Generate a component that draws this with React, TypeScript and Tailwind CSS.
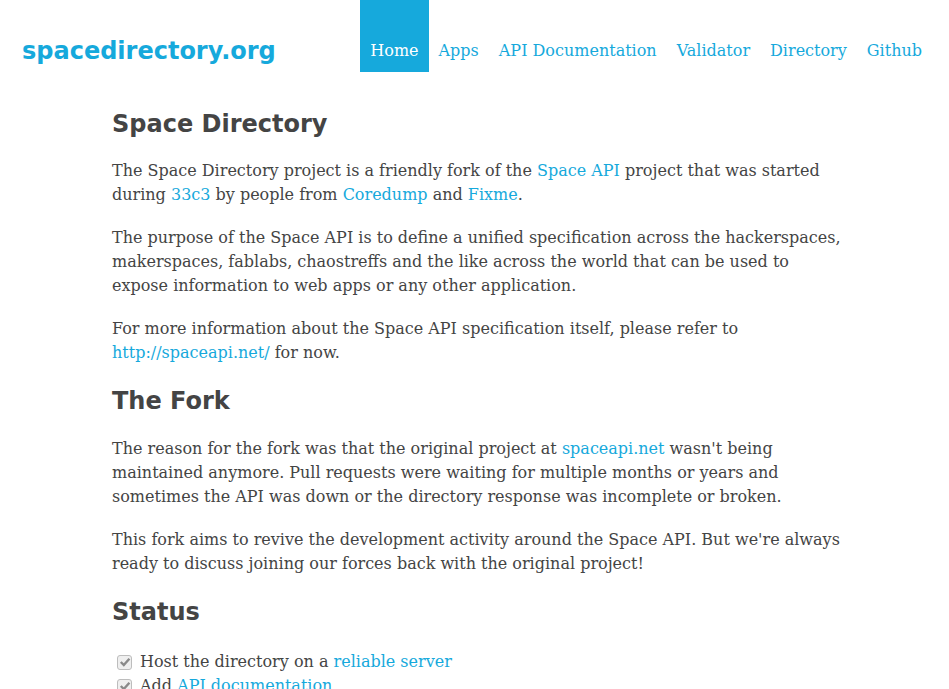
const LINK = "text-[#16a9dc]";
const SANS = "font-[family-name:DejaVu_Sans,sans-serif]";

function A({ children }: { children: React.ReactNode }) {
  return (
    <a href="#" className={`${LINK} no-underline`}>
      {children}
    </a>
  );
}

function Check() {
  return (
    <span className="mr-[8px] ml-[5px] inline-flex h-[15px] w-[15px] shrink-0 items-center justify-center rounded-[3px] border border-[#bdbdbd] bg-[#efefef]">
      <svg viewBox="0 0 12 12" className="h-[12px] w-[12px]">
        <path d="M1.8 6 L4.8 9 L10.4 2.8" fill="none" stroke="#8a8a8a" strokeWidth="2.4" />
      </svg>
    </span>
  );
}

const nav = ["Home", "Apps", "API Documentation", "Validator", "Directory", "Github"];

export default function App() {
  return (
    <div className="min-h-screen bg-white font-[family-name:DejaVu_Serif,serif] text-[#444]">
      <header className="flex h-[72px] items-stretch">
        <div className="flex flex-1 items-end pb-[6px] pl-[22px]">
          <a href="#" className={`${LINK} ${SANS} text-[24px] font-bold leading-[30px] no-underline`}>
            spacedirectory.org
          </a>
        </div>
        <nav className="flex items-stretch pr-[17px]">
          {nav.map((n, i) => (
            <a
              key={n}
              href="#"
              className={`flex items-end px-[10px] pb-[11px] text-[16px] leading-[20px] no-underline ${
                i === 0 ? "bg-[#16a9dc] text-white" : LINK
              }`}
            >
              {n}
            </a>
          ))}
        </nav>
      </header>

      <main className="mx-auto w-[735px] pt-[38px] pl-[5px] text-[16px] leading-[24px]">
        <h2 className={`${SANS} mb-[20px] text-[24px] font-bold leading-[29px]`}>Space Directory</h2>
        <p className="mb-[19px]">
          The Space Directory project is a friendly fork of the <A>Space API</A> project that was started
          during <A>33c3</A> by people from <A>Coredump</A> and <A>Fixme</A>.
        </p>
        <p className="mb-[19px]">
          The purpose of the Space API is to define a unified specification across the hackerspaces,
          makerspaces, fablabs, chaostreffs and the like across the world that can be used to expose
          information to web apps or any other application.
        </p>
        <p className="mb-[19px]">
          For more information about the Space API specification itself, please refer to{" "}
          <A>http://spaceapi.net/</A> for now.
        </p>

        <h2 className={`${SANS} mt-[22px] mb-[21px] text-[24px] font-bold leading-[29px]`}>The Fork</h2>
        <p className="mb-[19px]">
          The reason for the fork was that the original project at <A>spaceapi.net</A> wasn't being
          maintained anymore. Pull requests were waiting for multiple months or years and sometimes the
          API was down or the directory response was incomplete or broken.
        </p>
        <p className="mb-[19px]">
          This fork aims to revive the development activity around the Space API. But we're always ready
          to discuss joining our forces back with the original project!
        </p>

        <h2 className={`${SANS} mt-[22px] mb-[23px] text-[24px] font-bold leading-[29px]`}>Status</h2>
        <ul>
          <li className="flex items-center">
            <Check />
            <span>
              Host the directory on a <A>reliable server</A>
            </span>
          </li>
          <li className="flex items-center">
            <Check />
            <span>
              Add <A>API documentation</A>
            </span>
          </li>
          <li className="flex items-center">
            <Check />
            <span>Add a validator</span>
          </li>
        </ul>
      </main>
    </div>
  );
}
